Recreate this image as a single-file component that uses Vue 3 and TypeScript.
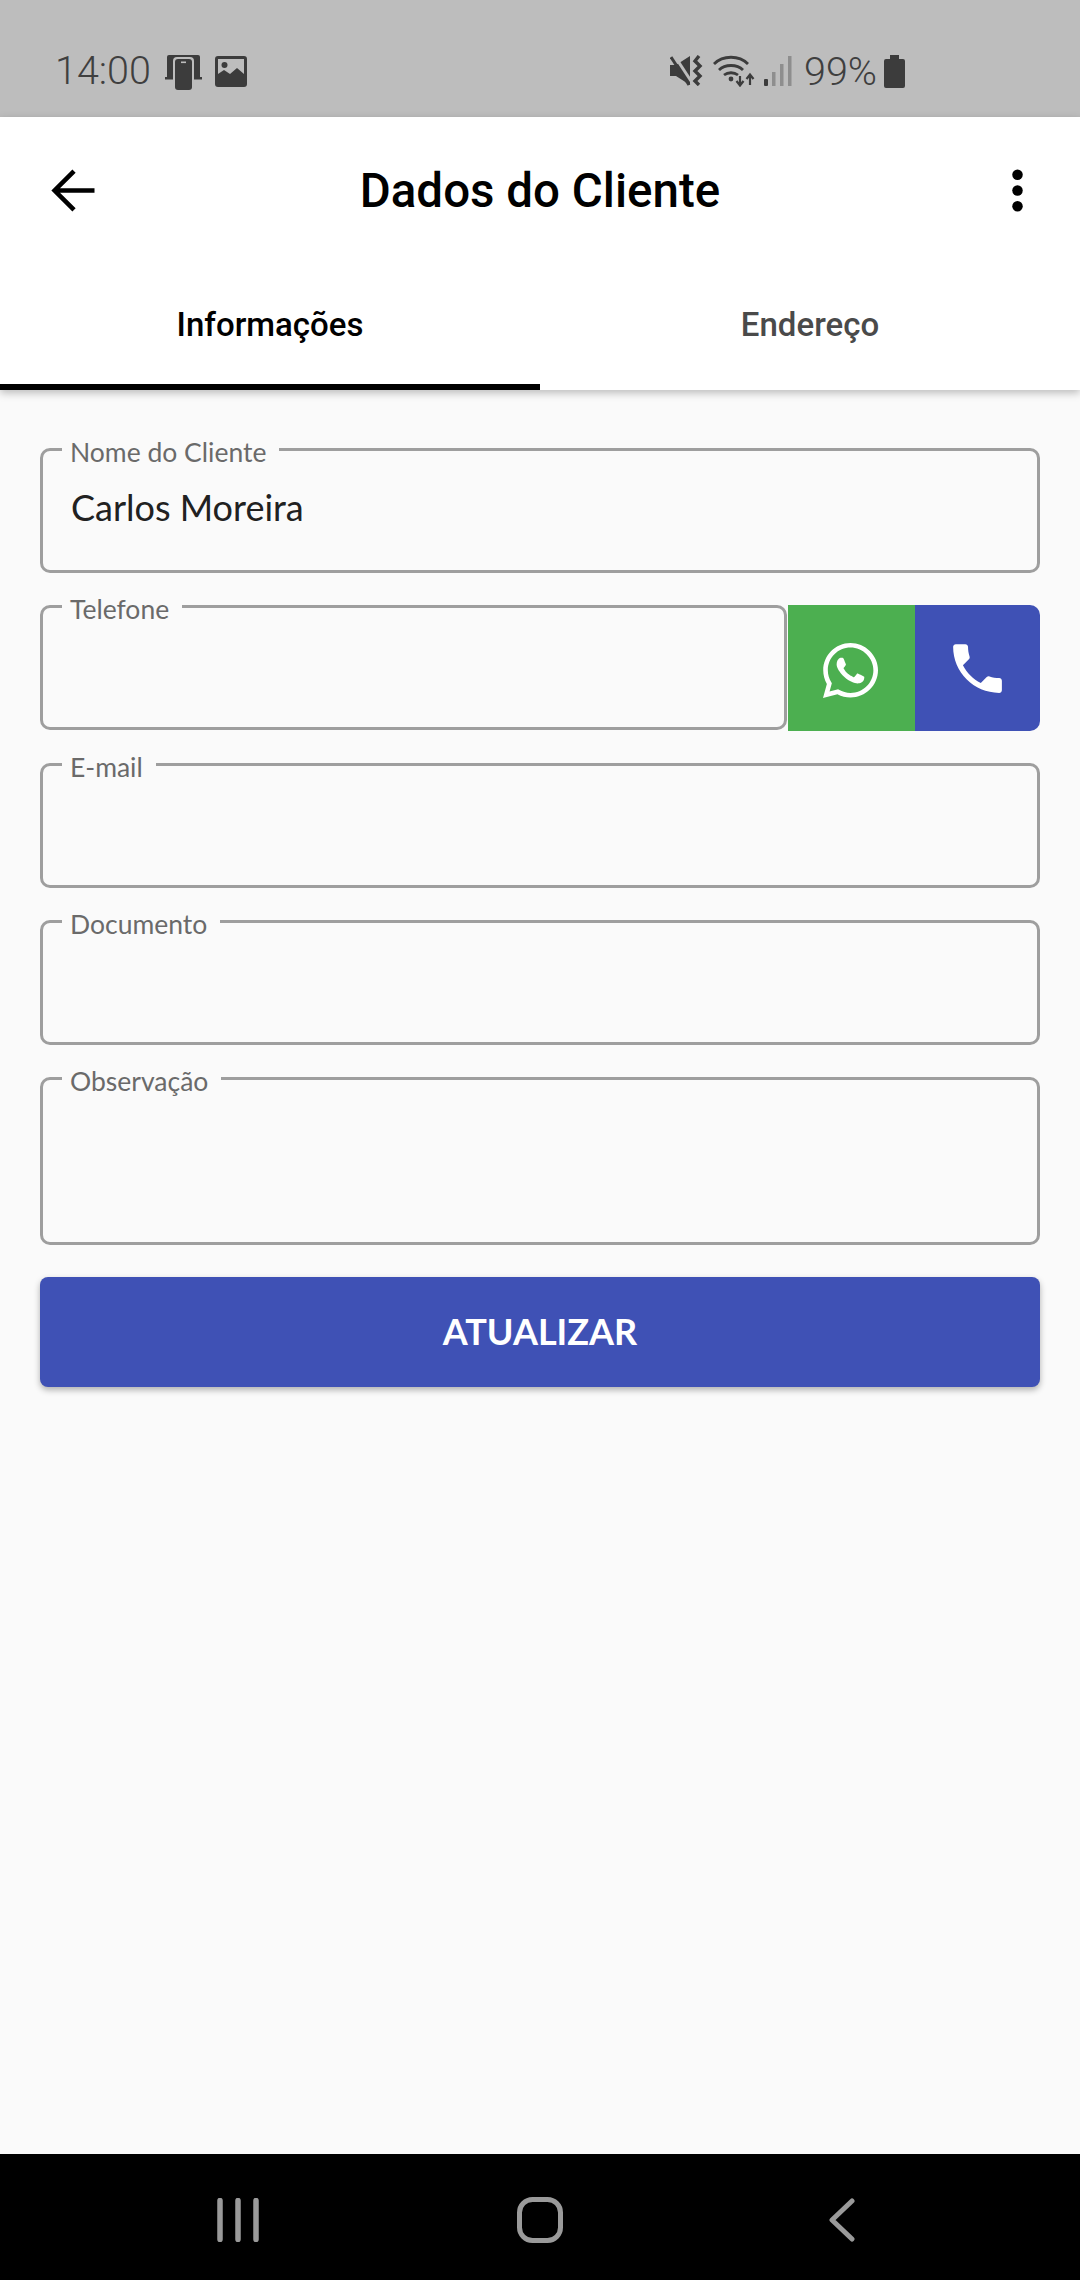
<script setup lang="ts">
import { ref } from 'vue'

interface Field {
  label: string
  value: string
  tall?: boolean
  actions?: boolean
}

const fields = ref<Field[]>([
  { label: 'Nome do Cliente', value: 'Carlos Moreira' },
  { label: 'Telefone', value: '', actions: true },
  { label: 'E-mail', value: '' },
  { label: 'Documento', value: '' },
  { label: 'Observação', value: '', tall: true }
])
</script>

<template>
  <div class="screen">
    <div class="status-bar">
      <span class="time">14:00</span>
      <svg class="ic-cast" viewBox="0 0 37 35" width="37" height="35">
        <path d="M4 0h29a2 2 0 0 1 2 2v20H2V2a2 2 0 0 1 2-2z" fill="#3c3c3c" />
        <rect y="22" width="37" height="2.500" fill="#3c3c3c" />
        <rect x="8" y="2" width="21" height="33" rx="4" fill="#bdbdbd" />
        <rect x="10" y="4" width="17" height="31" rx="3" fill="#3c3c3c" />
        <rect x="16" y="6.500" width="5" height="1.600" fill="#bdbdbd" />
      </svg>
      <svg class="ic-image" viewBox="0 0 32 31" width="32" height="31">
        <path fill-rule="evenodd" d="M3 0h26a3 3 0 0 1 3 3v25a3 3 0 0 1-3 3H3a3 3 0 0 1-3-3V3a3 3 0 0 1 3-3zM3 3v15l6-4 6 4 7-6 7 6V3z" fill="#3c3c3c" />
        <circle cx="9.500" cy="9" r="3" fill="#3c3c3c" />
      </svg>
      <div class="status-right">
        <svg viewBox="0 0 33 31" width="33" height="31">
          <path d="M0 10h6l14-9v29L6 21H0z" fill="#3c3c3c" />
          <path d="M4 0l17 26" stroke="#bdbdbd" stroke-width="3" />
          <path d="M1 2l18 28" stroke="#3c3c3c" stroke-width="3" />
          <path d="M29 1l-4 5 5 5-5 5 5 5-5 5 4 4" stroke="#3c3c3c" stroke-width="3.400" fill="none" />
        </svg>
        <svg class="ic-wifi" viewBox="0 0 42 32" width="42" height="32">
          <path d="M1 9C10 0 26 0 35 9" stroke="#3c3c3c" stroke-width="2.800" fill="none" />
          <path d="M6 15c6-6 18-6 24 0" stroke="#3c3c3c" stroke-width="2.800" fill="none" />
          <path d="M11 20c4-3 10-3 14 0" stroke="#3c3c3c" stroke-width="2.800" fill="none" />
          <circle cx="18" cy="24" r="2.400" fill="#3c3c3c" />
          <path d="M27 21v9m-3.500-4 3.500 4.500 3.500-4.500M37 30v-10m-3.500 4 3.500-4.500 3.500 4.500" stroke="#3c3c3c" stroke-width="2.200" fill="none" />
        </svg>
        <svg class="ic-signal" viewBox="0 0 28 31" width="28" height="31">
          <rect x="0" y="24" width="4" height="7" rx="1" fill="#3c3c3c" />
          <rect x="8" y="17" width="3.500" height="14" fill="#8e8e8e" />
          <rect x="16" y="9" width="3.500" height="22" fill="#8e8e8e" />
          <rect x="24" y="1" width="3.500" height="30" fill="#8e8e8e" />
        </svg>
        <span class="percent">99%</span>
        <svg viewBox="0 0 21 33" width="21" height="33">
          <path d="M6 0h9v4h4a2 2 0 0 1 2 2v25a2 2 0 0 1-2 2H2a2 2 0 0 1-2-2V6a2 2 0 0 1 2-2h4z" fill="#3c3c3c" />
        </svg>
      </div>
    </div>

    <header class="header">
      <div class="toolbar">
        <svg viewBox="0 0 24 24" width="63" height="63">
          <path d="M20 12H5.500M12.200 4.600 4.800 12l7.400 7.400" fill="none" stroke="#000" stroke-width="1.750" />
        </svg>
        <h1 class="title">Dados do Cliente</h1>
        <svg class="more" viewBox="0 0 24 24" width="63" height="63">
          <circle cx="12" cy="6" r="2" fill="#000" />
          <circle cx="12" cy="12" r="2" fill="#000" />
          <circle cx="12" cy="18" r="2" fill="#000" />
        </svg>
      </div>
      <div class="tabs">
        <div class="tab active">Informações</div>
        <div class="tab">Endereço</div>
      </div>
    </header>

    <main class="form">
      <div v-for="field in fields" :key="field.label" class="row">
        <fieldset class="field" :class="{ tall: field.tall }">
          <legend class="label">{{ field.label }}</legend>
          <div class="value">{{ field.value }}</div>
        </fieldset>
        <div v-if="field.actions" class="actions">
          <button class="action whatsapp">
            <svg viewBox="0 32 448 448" width="55" height="55">
              <path
                fill="#fff"
                d="M380.900 97.100C339 55.100 283.200 32 223.900 32c-122.400 0-222 99.600-222 222 0 39.100 10.200 77.300 29.600 111L0 480l117.700-30.900c32.400 17.700 68.900 27 106.100 27h.1c122.300 0 224.100-99.600 224.100-222 0-59.300-25.200-115-67.100-157zm-157 341.600c-33.200 0-65.700-8.900-94-25.700l-6.700-4-69.800 18.300L72 359.200l-4.400-7c-18.500-29.400-28.200-63.300-28.200-98.200 0-101.700 82.800-184.500 184.600-184.500 49.300 0 95.600 19.200 130.400 54.100 34.800 34.900 56.200 81.200 56.100 130.500 0 101.800-84.900 184.600-186.600 184.600zm101.200-138.200c-5.500-2.800-32.800-16.200-37.900-18-5.100-1.900-8.800-2.800-12.500 2.800-3.700 5.600-14.300 18-17.600 21.800-3.200 3.700-6.500 4.200-12 1.400-32.600-16.300-54-29.100-75.500-66-5.700-9.800 5.700-9.100 16.300-30.300 1.800-3.700.9-6.900-.5-9.700-1.400-2.800-12.500-30.100-17.100-41.200-4.500-10.800-9.100-9.300-12.500-9.500-3.200-.2-6.900-.2-10.600-.2-3.700 0-9.700 1.400-14.800 6.900-5.100 5.600-19.400 19-19.400 46.300 0 27.300 19.900 53.700 22.600 57.400 2.800 3.700 39.100 59.700 94.800 83.800 35.200 15.200 49 16.500 66.600 13.900 10.700-1.600 32.800-13.400 37.400-26.400 4.600-13 4.600-24.100 3.200-26.400-1.300-2.500-5-3.900-10.500-6.600z"
              />
            </svg>
          </button>
          <button class="action call">
            <svg viewBox="0 0 24 24" width="65" height="65">
              <path
                fill="#fff"
                d="M6.620 10.790c1.440 2.830 3.760 5.140 6.590 6.590l2.200-2.200c.27-.27.67-.36 1.020-.24 1.120.37 2.330.57 3.570.57.55 0 1 .45 1 1V20c0 .55-.45 1-1 1-9.390 0-17-7.610-17-17 0-.55.45-1 1-1h3.500c.55 0 1 .45 1 1 0 1.250.2 2.450.57 3.570.11.35.03.74-.25 1.020l-2.200 2.200z"
              />
            </svg>
          </button>
        </div>
      </div>
      <button class="submit">ATUALIZAR</button>
    </main>

    <nav class="nav-bar">
      <div class="nav-item">
        <svg viewBox="0 0 42 44" width="42" height="44">
          <path d="M3 2.500v39M21 2.500v39M39 2.500v39" stroke="#9a9a9a" stroke-width="5.500" stroke-linecap="round" />
        </svg>
      </div>
      <div class="nav-item">
        <svg viewBox="0 0 46 46" width="46" height="46">
          <rect x="2.500" y="2.500" width="41" height="41" rx="13" fill="none" stroke="#9a9a9a" stroke-width="5" />
        </svg>
      </div>
      <div class="nav-item">
        <svg viewBox="0 0 26 44" width="26" height="44">
          <path d="M23 3L3 22l20 19" fill="none" stroke="#9a9a9a" stroke-width="5" stroke-linecap="round" stroke-linejoin="round" />
        </svg>
      </div>
    </nav>
  </div>
</template>

<style scoped>
.screen {
  width: 1080px;
  height: 2280px;
  display: flex;
  flex-direction: column;
  background: #fafafa;
  font-family: Lato, sans-serif;
  overflow: hidden;
}

.status-bar {
  height: 117px;
  flex-shrink: 0;
  box-sizing: border-box;
  padding: 54px 0 0 55px;
  background: #bdbdbd;
  color: #3f3f3f;
  display: flex;
  align-items: flex-start;
  font-family: Roboto, sans-serif;
  font-size: 39.500px;
  font-weight: 300;
  line-height: 34px;
}

.time {
  width: 95px;
}

.ic-cast {
  margin: 1px 0 0 15px;
}

.ic-image {
  margin: 2px 0 0 13px;
}

.status-right {
  margin-left: 423px;
  display: flex;
  align-items: flex-start;
  margin-top: 1px;
}

.ic-wifi {
  margin-left: 10px;
}

.ic-signal {
  margin-left: 9px;
}

.percent {
  margin: 0 7px 0 12px;
}

.header {
  height: 273px;
  flex-shrink: 0;
  background: #fff;
  box-shadow: 0 3px 8px rgba(0, 0, 0, 0.25);
  position: relative;
}

.toolbar {
  height: 147px;
  box-sizing: border-box;
  padding: 0 31px 0 42px;
  display: grid;
  grid-template-columns: 1fr auto 1fr;
  align-items: center;
}

.more {
  justify-self: end;
}

.title {
  margin: 0 0 0 -11px;
  font-family: Roboto, sans-serif;
  font-size: 47.500px;
  font-weight: 500;
  color: #000;
}

.tabs {
  display: flex;
  height: 126px;
}

.tab {
  flex: 1;
  box-sizing: border-box;
  display: flex;
  align-items: center;
  justify-content: center;
  font-family: Roboto, sans-serif;
  font-size: 33px;
  font-weight: 500;
  color: #4a4a4a;
  border-bottom: 6px solid transparent;
}

.tab.active {
  color: #000;
  border-bottom-color: #000;
}

.form {
  flex: 1;
  display: flex;
  flex-direction: column;
  gap: 18px;
  padding: 44px 40px 0;
}

.row {
  display: flex;
}

.field {
  flex: 1;
  min-width: 0;
  height: 139px;
  box-sizing: border-box;
  margin: 0;
  padding: 0 0 0 28px;
  border: 3px solid #9e9e9e;
  border-radius: 10px;
}

.field.tall {
  height: 182px;
}

.label {
  margin-left: -9px;
  padding: 4px 13px 0 8px;
  height: 30px;
  box-sizing: border-box;
  font-size: 26.500px;
  line-height: 28px;
  color: #6a6a6a;
}

.value {
  margin-top: 20px;
  font-size: 36px;
  line-height: 46px;
  color: #212121;
}

.actions {
  display: flex;
  margin: 14px 0 0 1px;
}

.action {
  width: 125px;
  height: 126px;
  padding: 0;
  border: none;
  display: flex;
  align-items: center;
  justify-content: center;
}

.whatsapp {
  width: 127px;
  padding-right: 2px;
  background: #4caf50;
}

.whatsapp svg {
  margin-top: 5px;
}

.call {
  background: #3f51b5;
  border-radius: 0 10px 10px 0;
}

.submit {
  height: 110px;
  flex-shrink: 0;
  margin-top: 14px;
  padding: 0 0 3px;
  border: none;
  border-radius: 8px;
  background: #3f51b5;
  color: #fff;
  font-family: Lato, sans-serif;
  font-size: 36px;
  font-weight: 700;
  box-shadow: 0 3px 6px rgba(0, 0, 0, 0.3);
}

.nav-bar {
  height: 126px;
  flex-shrink: 0;
  box-sizing: border-box;
  padding-top: 5px;
  background: #000;
  display: flex;
  justify-content: center;
  align-items: center;
}

.nav-item {
  width: 302px;
  display: flex;
  justify-content: center;
}
</style>
